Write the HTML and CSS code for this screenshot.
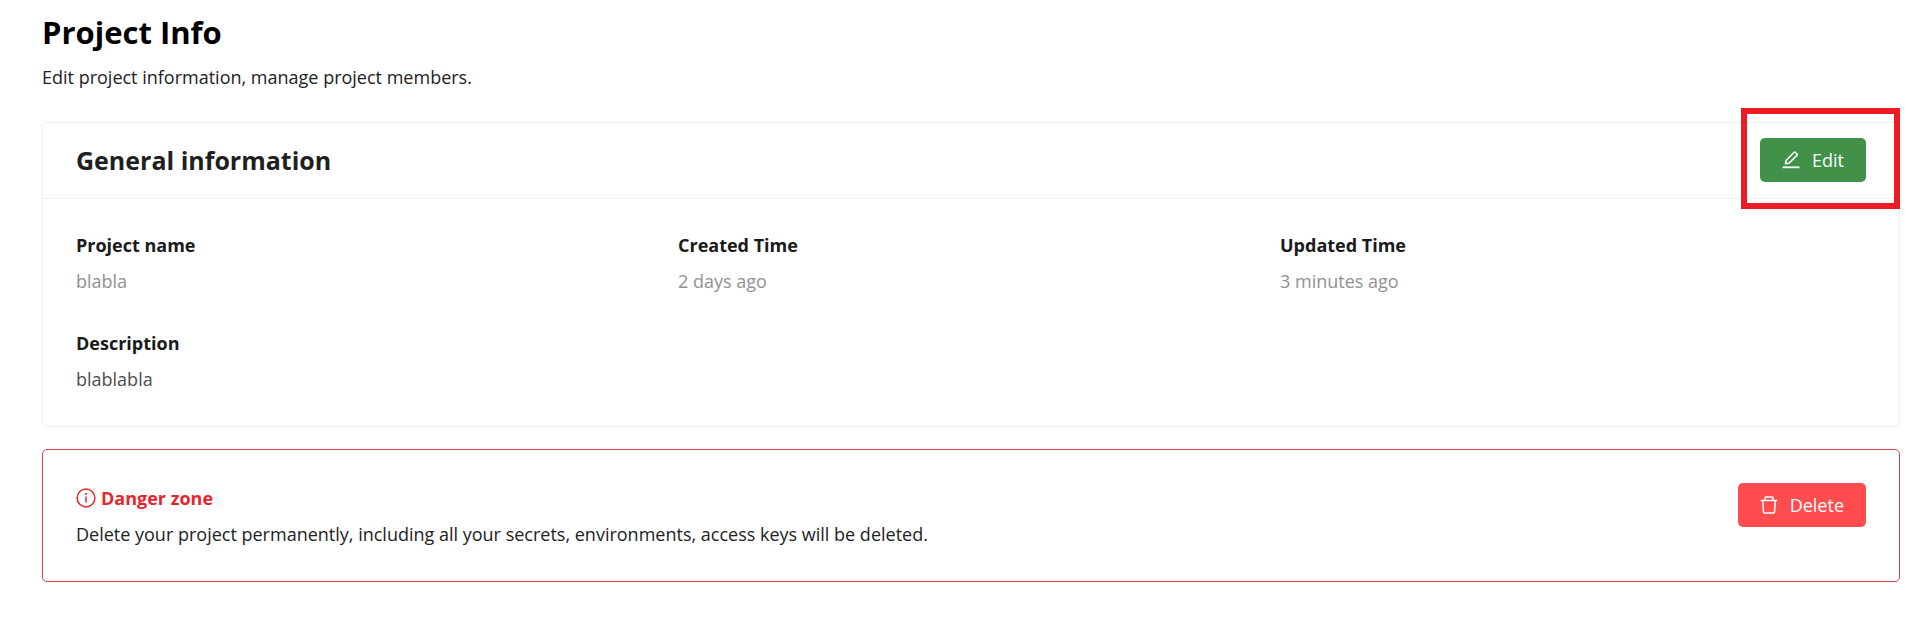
FILE: index.html
```
<!DOCTYPE html>
<html lang="en">
<head>
  <meta charset="UTF-8">
  <meta name="viewport" content="width=device-width, initial-scale=1.0">
  <title>Project Info</title>
  <link rel="stylesheet" href="styles.css">
</head>
<body>
  <main class="page">
    <h1>Project Info</h1>
    <p class="subtitle">Edit project information, manage project members.</p>

    <section class="card">
      <header class="card-header">
        <h2>General information</h2>
        <button type="button" class="btn btn-edit">
          <svg viewBox="0 0 18 18" width="18" height="18" fill="none" stroke="currentColor" stroke-width="1.5" stroke-linejoin="round">
            <path d="M4.2 9.2 12.2 1.2a.7.7 0 0 1 1 0l1.9 1.9a.7.7 0 0 1 0 1L7.1 12.1 3.5 12.8z"/>
            <path d="M.5 16.3h17" stroke-width="1.8"/>
          </svg>
          Edit
        </button>
        <div class="highlight"></div>
      </header>
      <dl class="info">
        <div>
          <dt>Project name</dt>
          <dd>blabla</dd>
        </div>
        <div>
          <dt>Created Time</dt>
          <dd>2 days ago</dd>
        </div>
        <div>
          <dt>Updated Time</dt>
          <dd>3 minutes ago</dd>
        </div>
        <div>
          <dt>Description</dt>
          <dd class="dark">blablabla</dd>
        </div>
      </dl>
    </section>

    <section class="card danger">
      <div class="danger-text">
        <h3>
          <svg viewBox="0 0 20 20" width="20" height="20" fill="none" stroke="currentColor" stroke-width="1.5">
            <circle cx="10" cy="10" r="8.9"/>
            <path d="M10 8.4v6"/>
            <circle cx="10" cy="6" r="1" fill="currentColor" stroke="none"/>
          </svg>
          Danger zone
        </h3>
        <p>Delete your project permanently, including all your secrets, environments, access keys will be deleted.</p>
      </div>
      <button type="button" class="btn btn-delete">
        <svg viewBox="0 0 18 18" width="18" height="18" fill="none" stroke="currentColor" stroke-width="1.5" stroke-linejoin="round">
          <path d="M.8 4.5h16.4M5 4.5V1.9a.9.9 0 0 1 .9-.9h6.2a.9.9 0 0 1 .9.9v2.6"/>
          <path d="M2.8 4.5l.7 11.7a.9.9 0 0 0 .9.8h9.2a.9.9 0 0 0 .9-.8l.7-11.7"/>
        </svg>
        Delete
      </button>
    </section>
  </main>
</body>
</html>
```
FILE: styles.css
```
body {
  margin: 0;
  background: #fff;
  color: #222;
  font-family: 'Segoe UI', 'Open Sans', sans-serif;
  font-size: 18px;
  line-height: 28px;
}

h1, h2, h3, p, dl, dd {
  margin: 0;
}

.page {
  padding: 12px 20px 44px 42px;
}

h1 {
  color: #000;
  font-size: 31px;
  line-height: 40px;
  font-weight: 700;
}

.subtitle {
  margin: 11px 0 31px;
}

.card {
  border: 1px solid #f0f0f0;
  border-radius: 5px;
}

.card-header {
  position: relative;
  display: flex;
  align-items: center;
  justify-content: space-between;
  padding: 15px 33px 16px;
  border-bottom: 1px solid #f0f0f0;
}

h2 {
  color: #1f1f1f;
  font-size: 25px;
  line-height: 40px;
  font-weight: 700;
}

.btn {
  display: flex;
  align-items: center;
  gap: 12px;
  height: 44px;
  padding: 0 22px;
  border: none;
  border-radius: 5px;
  color: #fff;
  font-family: inherit;
  font-size: 18px;
  cursor: pointer;
}

.btn-edit {
  background: #419149;
}

.btn-delete {
  background: #ff4d4f;
}

/* red frame around the edit button */
.highlight {
  position: absolute;
  top: -15px;
  right: -1px;
  bottom: -11px;
  width: 147px;
  border: 6px solid #ed1c24;
  pointer-events: none;
}

.info {
  display: grid;
  grid-template-columns: repeat(3, 1fr);
  gap: 34px 16px;
  padding: 32px 33px 33px;
}

dt, h3 {
  margin-bottom: 8px;
  color: #1a1a1a;
  font-size: 18px;
  font-weight: 700;
}

dd {
  color: #919191;
}

.dark {
  color: #4d4d4d;
}

.danger {
  display: flex;
  align-items: flex-start;
  justify-content: space-between;
  margin-top: 22px;
  padding: 33px 33px 32px;
  border-color: #d9434c;
}

.danger-text {
  padding: 1px 0;
}

h3 {
  display: flex;
  align-items: center;
  gap: 5px;
  color: #e5262e;
}
```
